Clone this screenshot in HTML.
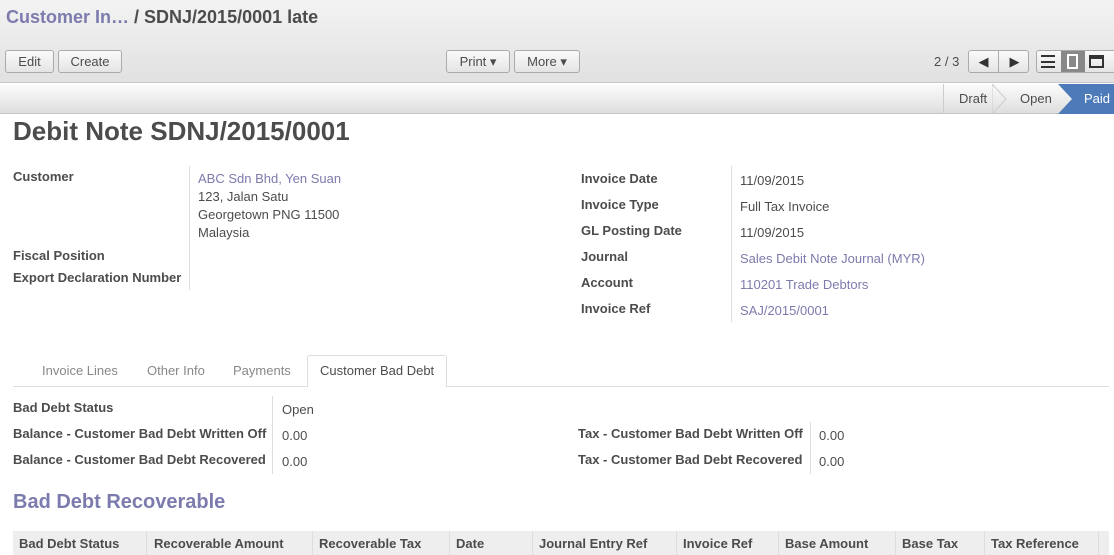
<!DOCTYPE html>
<html><head><meta charset="utf-8"><style>
*{box-sizing:border-box;margin:0;padding:0}
body{width:1114px;height:555px;overflow:hidden;font-family:"Liberation Sans",Arial,sans-serif;font-size:13px;color:#4c4c4c;background:#fff;position:relative}
.a{position:absolute;white-space:nowrap}
.top{position:absolute;left:0;top:0;width:1114px;height:83px;background:linear-gradient(#f3f3f3,#e1e1e1);border-bottom:1px solid #c8c8c8}
.bar{position:absolute;left:0;top:84px;width:1114px;height:30px;background:linear-gradient(#fcfcfc,#dedede);border-bottom:1px solid #c4c4c4}
.btn{position:absolute;top:50px;height:23px;border:1px solid #aaa;border-radius:3px;background:linear-gradient(#fafafa,#e4e4e4);font-size:13px;color:#4c4c4c;text-align:center;line-height:21px}
.lbl{font-weight:bold;color:#4c4c4c}
.lnk{color:#7c7bad}
.vl{position:absolute;width:1px;background:#ddd}
</style></head><body>
<div class="top"></div>
<div class="a" style="left:6px;top:7px;font-size:18px;font-weight:bold;color:#7c7bad">Customer In… <span style="color:#4c4c4c">/ SDNJ/2015/0001 late</span></div>
<div class="btn" style="left:5px;width:49px">Edit</div>
<div class="btn" style="left:58px;width:64px">Create</div>
<div class="btn" style="left:446px;width:64px">Print ▾</div>
<div class="btn" style="left:514px;width:66px">More ▾</div>
<div class="a" style="left:934px;top:54px;color:#4c4c4c">2 / 3</div>
<div class="btn" style="left:968px;width:61px;top:50px"><span style="position:absolute;left:0;width:30px;border-right:1px solid #aaa;height:21px;color:#333">◀</span><span style="position:absolute;left:31px;width:29px;color:#333">▶</span></div>
<div class="btn" style="left:1036px;width:80px;top:50px;text-align:left">
<span style="position:absolute;left:4px;top:4px;width:14px;height:13px;border-top:2px solid #333;border-bottom:2px solid #333"><span style="position:absolute;top:3.5px;left:0;width:14px;height:2px;background:#333"></span></span>
<span style="position:absolute;left:24px;top:0;width:24px;height:21px;background:#888"><span style="position:absolute;left:6px;top:3px;width:11px;height:15px;border:2px solid #fff"></span></span>
<span style="position:absolute;left:52px;top:4px;width:15px;height:13px;border:2px solid #333;border-top-width:4px"></span>
</div>
<div class="bar"></div>
<div class="a" style="left:943px;top:84px;width:110px;height:30px;border-left:1px solid #ccc"></div>
<svg class="a" style="left:992px;top:84px" width="122" height="30"><polygon points="0,0 14,15 0,30" fill="none" stroke="#ccc"/><polygon points="66,0 122,0 122,30 66,30 80,15" fill="#4d7ab8"/></svg>
<div class="a" style="left:959px;top:91px">Draft</div>
<div class="a" style="left:1020px;top:91px">Open</div>
<div class="a" style="left:1084px;top:91px;color:#fff">Paid</div>
<div class="a" style="left:13px;top:116px;font-size:26px;font-weight:bold;color:#4c4c4c">Debit Note SDNJ/2015/0001</div>
<div class="a lbl" style="left:13px;top:169px">Customer</div>
<div class="a lbl" style="left:13px;top:248px">Fiscal Position</div>
<div class="a lbl" style="left:13px;top:270px">Export Declaration Number</div>
<div class="vl" style="left:189px;top:166px;height:124px"></div>
<div class="a lnk" style="left:198px;top:171px">ABC Sdn Bhd, Yen Suan</div>
<div class="a" style="left:198px;top:189px">123, Jalan Satu</div>
<div class="a" style="left:198px;top:207px">Georgetown PNG 11500</div>
<div class="a" style="left:198px;top:225px">Malaysia</div>
<div class="a lbl" style="left:581px;top:171px">Invoice Date</div>
<div class="a lbl" style="left:581px;top:197px">Invoice Type</div>
<div class="a lbl" style="left:581px;top:223px">GL Posting Date</div>
<div class="a lbl" style="left:581px;top:249px">Journal</div>
<div class="a lbl" style="left:581px;top:275px">Account</div>
<div class="a lbl" style="left:581px;top:301px">Invoice Ref</div>
<div class="vl" style="left:731px;top:166px;height:156px"></div>
<div class="a" style="left:740px;top:173px">11/09/2015</div>
<div class="a" style="left:740px;top:199px">Full Tax Invoice</div>
<div class="a" style="left:740px;top:225px">11/09/2015</div>
<div class="a lnk" style="left:740px;top:251px">Sales Debit Note Journal (MYR)</div>
<div class="a lnk" style="left:740px;top:277px">110201 Trade Debtors</div>
<div class="a lnk" style="left:740px;top:303px">SAJ/2015/0001</div>
<div class="a" style="left:13px;top:386px;width:1096px;height:1px;background:#ddd"></div>
<div class="a" style="left:307px;top:355px;width:140px;height:32px;background:#fff;border:1px solid #ddd;border-bottom:none;border-radius:3px 3px 0 0"></div>
<div class="a" style="left:42px;top:363px;color:#888">Invoice Lines</div>
<div class="a" style="left:147px;top:363px;color:#888">Other Info</div>
<div class="a" style="left:233px;top:363px;color:#888">Payments</div>
<div class="a" style="left:320px;top:363px;color:#4c4c4c">Customer Bad Debt</div>
<div class="a lbl" style="left:13px;top:400px">Bad Debt Status</div>
<div class="a lbl" style="left:13px;top:426px">Balance - Customer Bad Debt Written Off</div>
<div class="a lbl" style="left:13px;top:452px">Balance - Customer Bad Debt Recovered</div>
<div class="vl" style="left:272px;top:396px;height:78px"></div>
<div class="a" style="left:282px;top:402px">Open</div>
<div class="a" style="left:282px;top:428px">0.00</div>
<div class="a" style="left:282px;top:454px">0.00</div>
<div class="a lbl" style="left:578px;top:426px">Tax - Customer Bad Debt Written Off</div>
<div class="a lbl" style="left:578px;top:452px">Tax - Customer Bad Debt Recovered</div>
<div class="vl" style="left:810px;top:422px;height:52px"></div>
<div class="a" style="left:819px;top:428px">0.00</div>
<div class="a" style="left:819px;top:454px">0.00</div>
<div class="a" style="left:13px;top:491px;font-size:20px;font-weight:bold;color:#7c7bad">Bad Debt Recoverable</div>
<div class="a" style="left:13px;top:531px;width:1096px;height:24px;background:#eee"></div>
<div class="a lbl" style="left:19px;top:536px">Bad Debt Status</div>
<div class="a lbl" style="left:154px;top:536px">Recoverable Amount</div>
<div class="a lbl" style="left:319px;top:536px">Recoverable Tax</div>
<div class="a lbl" style="left:456px;top:536px">Date</div>
<div class="a lbl" style="left:539px;top:536px">Journal Entry Ref</div>
<div class="a lbl" style="left:683px;top:536px">Invoice Ref</div>
<div class="a lbl" style="left:785px;top:536px">Base Amount</div>
<div class="a lbl" style="left:902px;top:536px">Base Tax</div>
<div class="a lbl" style="left:991px;top:536px">Tax Reference</div>
<div class="vl" style="left:146px;top:531px;height:24px"></div>
<div class="vl" style="left:312px;top:531px;height:24px"></div>
<div class="vl" style="left:449px;top:531px;height:24px"></div>
<div class="vl" style="left:532px;top:531px;height:24px"></div>
<div class="vl" style="left:676px;top:531px;height:24px"></div>
<div class="vl" style="left:778px;top:531px;height:24px"></div>
<div class="vl" style="left:895px;top:531px;height:24px"></div>
<div class="vl" style="left:984px;top:531px;height:24px"></div>
<div class="vl" style="left:1098px;top:531px;height:24px"></div>
</body></html>
